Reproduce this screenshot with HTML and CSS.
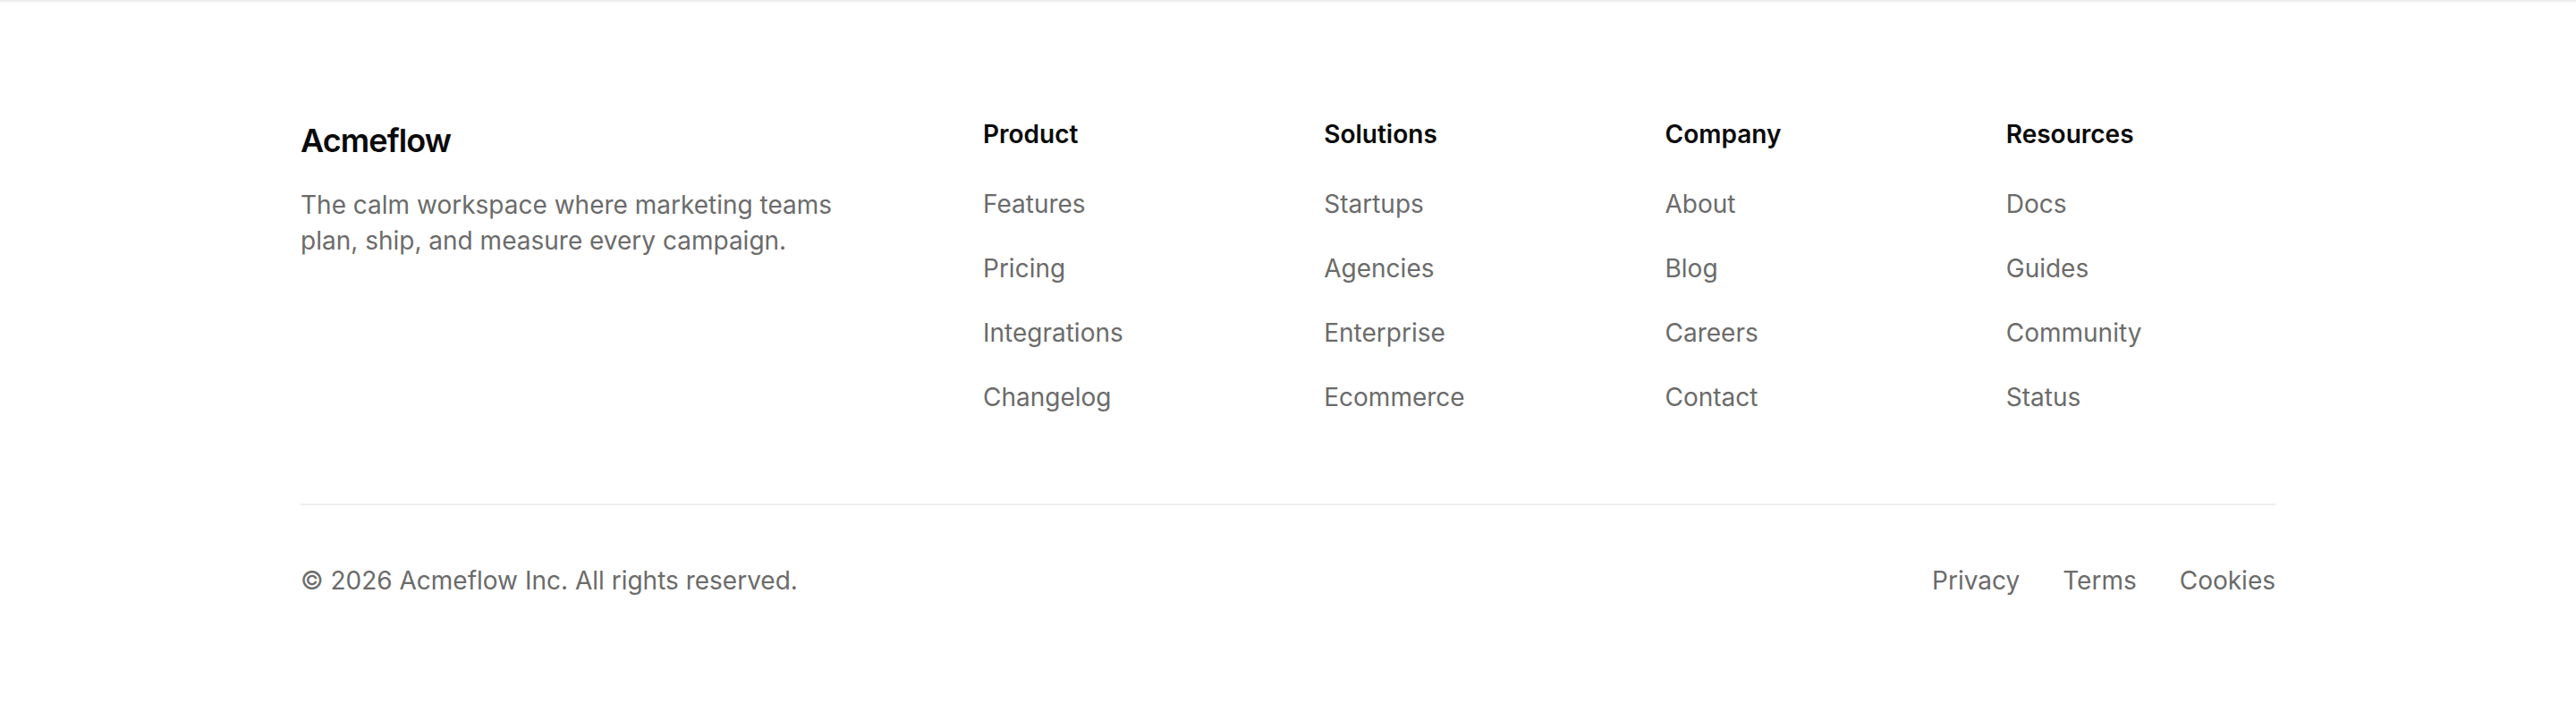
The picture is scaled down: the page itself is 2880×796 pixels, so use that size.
FILE: index.html
```html
<!DOCTYPE html>
<html lang="en">
<head>
<meta charset="utf-8">
<title>Acmeflow footer</title>
<link rel="stylesheet" href="styles.css">
</head>
<body>
<footer class="footer">
  <div class="container">
    <div class="top">
      <div class="brand">
        <div class="brand-name">Acmeflow</div>
        <p class="brand-desc">The calm workspace where marketing teams plan, ship, and measure every campaign.</p>
      </div>
      <nav class="col">
        <h4 class="col-title">Product</h4>
        <ul class="links">
          <li><a href="#">Features</a></li>
          <li><a href="#">Pricing</a></li>
          <li><a href="#">Integrations</a></li>
          <li><a href="#">Changelog</a></li>
        </ul>
      </nav>
      <nav class="col">
        <h4 class="col-title">Solutions</h4>
        <ul class="links">
          <li><a href="#">Startups</a></li>
          <li><a href="#">Agencies</a></li>
          <li><a href="#">Enterprise</a></li>
          <li><a href="#">Ecommerce</a></li>
        </ul>
      </nav>
      <nav class="col">
        <h4 class="col-title">Company</h4>
        <ul class="links">
          <li><a href="#">About</a></li>
          <li><a href="#">Blog</a></li>
          <li><a href="#">Careers</a></li>
          <li><a href="#">Contact</a></li>
        </ul>
      </nav>
      <nav class="col">
        <h4 class="col-title">Resources</h4>
        <ul class="links">
          <li><a href="#">Docs</a></li>
          <li><a href="#">Guides</a></li>
          <li><a href="#">Community</a></li>
          <li><a href="#">Status</a></li>
        </ul>
      </nav>
    </div>
    <div class="bottom">
      <p class="copy">© 2026 Acmeflow Inc. All rights reserved.</p>
      <div class="legal">
        <a href="#">Privacy</a>
        <a href="#">Terms</a>
        <a href="#">Cookies</a>
      </div>
    </div>
  </div>
</footer>
</body>
</html>
```

FILE: styles.css
```css
* {
  box-sizing: border-box;
}

html, body {
  margin: 0;
  padding: 0;
  background: #ffffff;
}

body {
  font-family: Inter, "Noto Sans", "Liberation Sans", sans-serif;
  color: #6b6b6b;
}

.footer {
  border-top: 2px solid #ededed;
}

.container {
  width: 2208px;
  margin: 0 auto;
  padding-top: 128px;
  padding-bottom: 64px;
}

.top {
  display: grid;
  grid-template-columns: 683px repeat(4, 1fr);
  column-gap: 80px;
}

.brand-name {
  font-size: 36px;
  line-height: 54px;
  font-weight: 600;
  color: #0a0a0a;
  letter-spacing: -0.9px;
}

.brand-desc {
  margin: 25px 0 0;
  font-size: 28px;
  line-height: 40px;
  color: #6b6b6b;
  max-width: 640px;
}

.col-title {
  margin: 0;
  font-size: 28px;
  line-height: 40px;
  font-weight: 600;
  color: #0a0a0a;
}

.links {
  list-style: none;
  margin: 38px 0 0;
  padding: 0;
  display: flex;
  flex-direction: column;
  gap: 32px;
}

.links li {
  font-size: 28px;
  line-height: 40px;
}

a {
  color: #6b6b6b;
  text-decoration: none;
}

.bottom {
  margin-top: 99px;
  border-top: 2px solid #eeeeee;
  padding-top: 64px;
  display: flex;
  justify-content: space-between;
  align-items: center;
}

.copy {
  margin: 0;
  font-size: 28px;
  line-height: 40px;
}

.legal {
  display: flex;
  gap: 48px;
  font-size: 28px;
  line-height: 40px;
}
```
